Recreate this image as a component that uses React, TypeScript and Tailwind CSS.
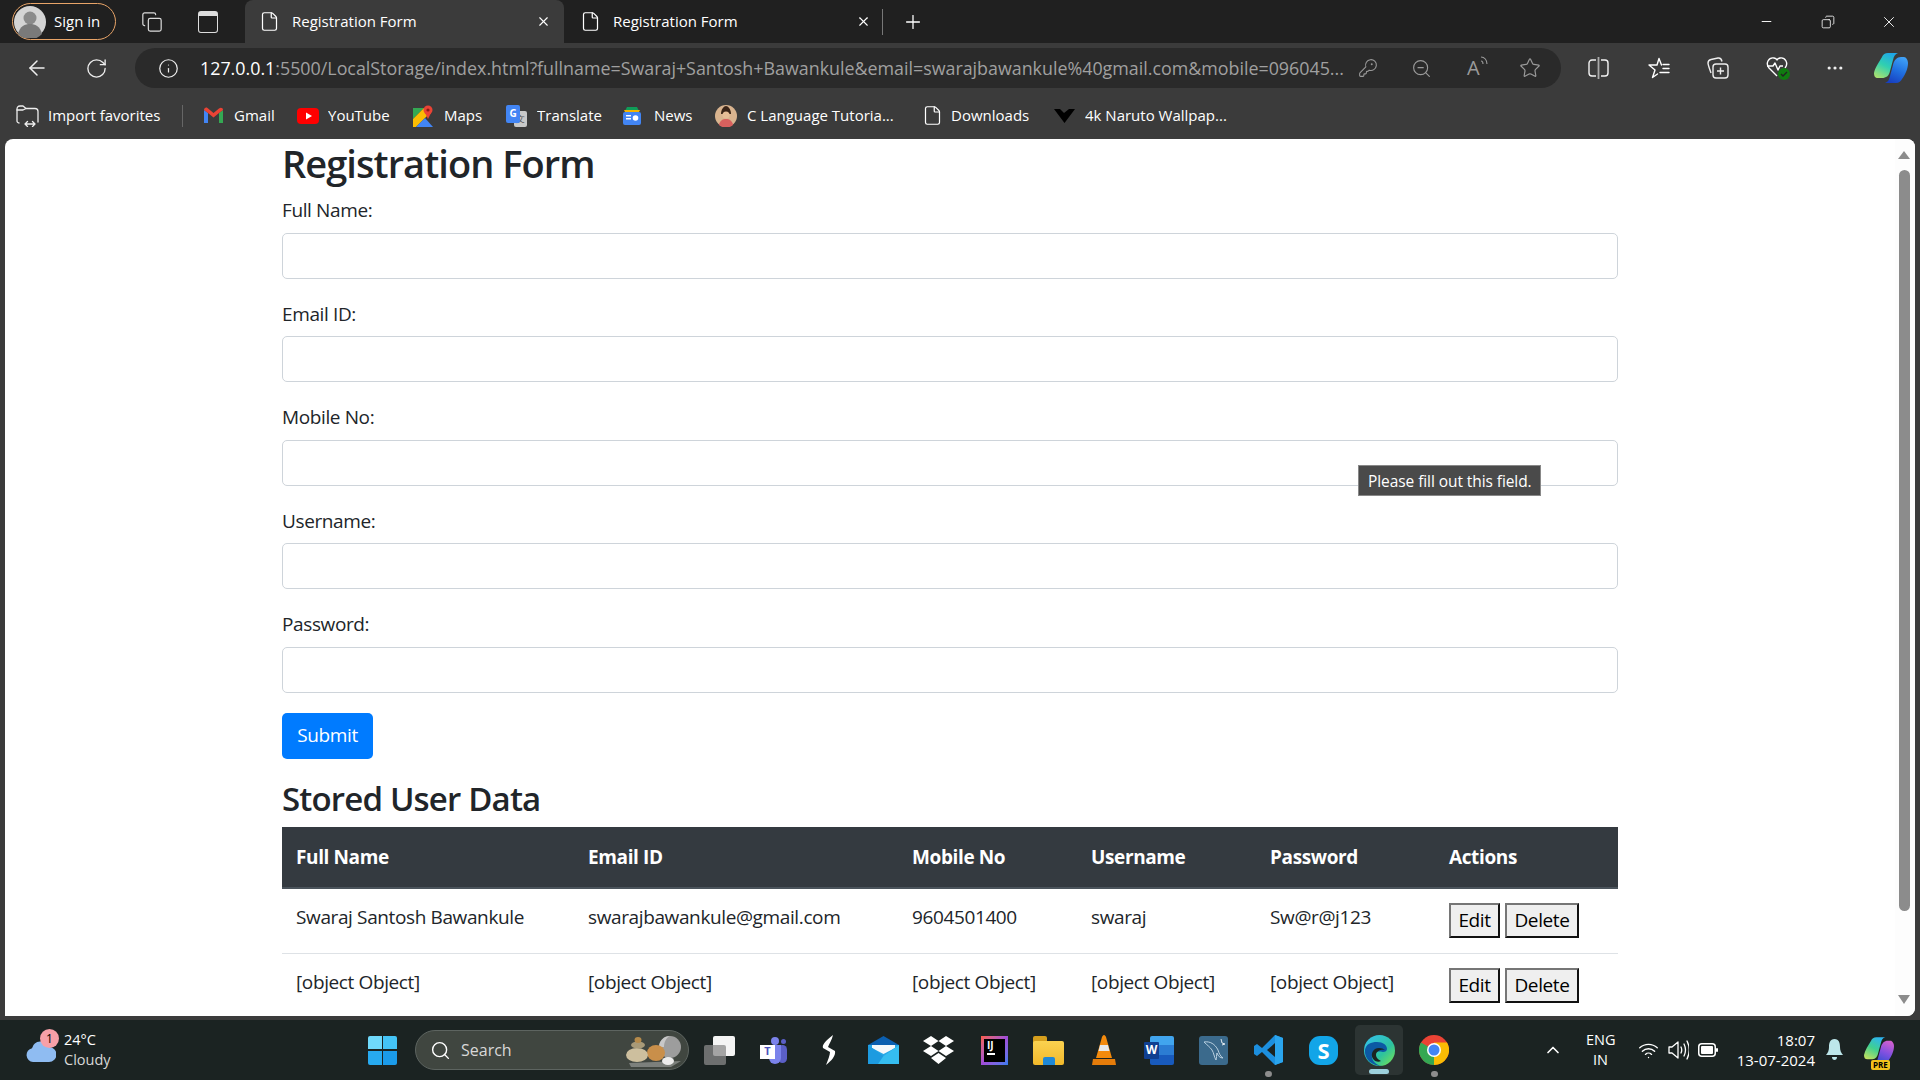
import {
  ArrowLeft,
  ChevronUp,
  Copy,
  File,
  Info,
  KeyRound,
  Minus,
  MoreHorizontal,
  Plus,
  RotateCw,
  Search,
  Star,
  Wifi,
  X,
  ZoomOut,
} from "lucide-react";

const fields = ["Full Name:", "Email ID:", "Mobile No:", "Username:", "Password:"];
const cols = ["Full Name", "Email ID", "Mobile No", "Username", "Password", "Actions"];
const rows = [
  ["Swaraj Santosh Bawankule", "swarajbawankule@gmail.com", "9604501400", "swaraj", "Sw@r@j123"],
  ["[object Object]", "[object Object]", "[object Object]", "[object Object]", "[object Object]"],
];

const Avatar = () => (
  <svg width="32" height="32" viewBox="0 0 32 32">
    <circle cx="16" cy="16" r="16" fill="#d4d4d4" />
    <circle cx="16" cy="12" r="6.500" fill="#8a8a8a" />
    <path d="M4 28c2-8 7-10 12-10s10 2 12 10a16 16 0 0 1-24 0z" fill="#7a7a7a" />
  </svg>
);

const Gmail = () => (
  <svg width="21" height="17" viewBox="0 0 21 17">
    <path d="M1 16V3l4 3v10z" fill="#4285f4" />
    <path d="M20 16V3l-4 3v10z" fill="#34a853" />
    <path d="M5 6 1 3c0-2 2-3 3.500-2L10.500 6 16 1.500C18 0 20 1 20 3l-4 3-5.500 4.500z" fill="#ea4335" />
  </svg>
);

const YouTube = () => (
  <svg width="22" height="16" viewBox="0 0 22 16">
    <rect width="22" height="16" rx="4" fill="#f00" />
    <path d="M9 4.500v7l6-3.500z" fill="#fff" />
  </svg>
);

const Maps = () => (
  <svg width="20" height="22" viewBox="0 0 20 22">
    <path d="M0 3h11l-11 11z" fill="#34a853" />
    <path d="M0 14 11 3l5 6L3 22H0z" fill="#fbbc04" />
    <path d="M3 22 12 13l8 9z" fill="#4285f4" />
    <circle cx="15" cy="5" r="4.500" fill="#ea4335" />
    <path d="m12 8 3 6 3-6z" fill="#ea4335" />
    <circle cx="15" cy="5" r="1.600" fill="#8b1d14" />
  </svg>
);

const Translate = () => (
  <div className="relative h-[22px] w-[21px]">
    <div className="absolute bottom-0 right-0 flex h-[16px] w-[13px] items-center justify-center rounded-[2px] bg-[#c9c9c9] text-[9px] text-[#555]">文</div>
    <div className="absolute left-0 top-0 flex h-[18px] w-[14px] items-center justify-center rounded-[2px] bg-[#4285f4] text-[10px] font-bold text-white">G</div>
  </div>
);

const News = () => (
  <svg width="20" height="20" viewBox="0 0 20 20">
    <path d="M3 5 5 1h10l2 4z" fill="#0f9d58" />
    <path d="M2 4h16l-1 2H3z" fill="#f4b400" />
    <rect x="1" y="6" width="18" height="13" rx="2" fill="#4285f4" />
    <rect x="4" y="9" width="5" height="1.500" fill="#fff" />
    <rect x="4" y="12" width="5" height="1.500" fill="#fff" />
    <circle cx="13.500" cy="12" r="2.800" fill="#fff" />
  </svg>
);

const CTutorial = () => (
  <svg width="22" height="22" viewBox="0 0 22 22">
    <circle cx="11" cy="11" r="11" fill="#d9b48f" />
    <path d="M6 9c0-5 3-8 5-8s5 3 5 8z" fill="#3a2417" />
    <circle cx="11" cy="10" r="3.500" fill="#e6bd96" />
    <path d="M4 20c1-5 4-6 7-6s6 1 7 6a11 11 0 0 1-14 0z" fill="#d8605e" />
  </svg>
);

const Naruto = () => (
  <svg width="21" height="14" viewBox="0 0 21 14">
    <path d="M0 0h6l4 4 5-4h6L10.500 14z" fill="#000" />
  </svg>
);

const ImportIcon = () => (
  <svg width="23" height="22" viewBox="0 0 23 22" fill="none" stroke="#eee" strokeWidth="1.300" strokeLinecap="round" strokeLinejoin="round">
    <path d="M3 18c-1 0-2-1-2-2V4c0-1.500 1-3 3-3h3l3 2.500h9c1.500 0 3 1 3 3V17" />
    <path d="M1 5h6l3-1.500" />
    <path d="M9 19h10M11.500 16.500 9 19l2.500 2.500M16.500 16.500 19 19l-2.500 2.500" />
  </svg>
);

const SplitIcon = () => (
  <svg width="21" height="22" viewBox="0 0 21 22" fill="none" stroke="#f2f2f2" strokeWidth="1.400">
    <path d="M8 3H4a3 3 0 0 0-3 3v10a3 3 0 0 0 3 3h4M13 3h4a3 3 0 0 1 3 3v10a3 3 0 0 1-3 3h-4" />
    <path d="M10.500 0v22" stroke="#aaa" strokeWidth="1.800" />
  </svg>
);

const FavIcon = () => (
  <svg width="22" height="22" viewBox="0 0 22 22" fill="none" stroke="#fff" strokeWidth="1.400" strokeLinejoin="round" strokeLinecap="round">
    <path d="M9 8 11 1.500 13.500 8M9 8H1l6 5-2.500 7.500 5-3.500" />
    <path d="M15 7.500h6M15 11.500h6M12 15.500h9" />
  </svg>
);

const CollectionsIcon = () => (
  <svg width="22" height="22" viewBox="0 0 22 22" fill="none" stroke="#eee" strokeWidth="1.400">
    <path d="M4 16C3 13 1 8 1 6c0-2 1-3 3-3.500L11 1c2-.3 3.500 1 4 3.500" />
    <rect x="6" y="7" width="15" height="14" rx="3" />
    <path d="M13.500 10.500v7M10 14h7" />
  </svg>
);

const HealthIcon = () => (
  <div className="relative h-[24px] w-[24px]">
    <svg width="22" height="22" viewBox="0 0 22 22" fill="none" stroke="#fff" strokeWidth="1.400" strokeLinejoin="round">
      <path d="M11 20 3 12C-1 7 3 1 8 2c1.500.3 2.500 1 3 2 .5-1 1.500-1.700 3-2 5-1 9 5 5 10" />
      <path d="M1 10h6l2-3 3 7 2-4h3" />
    </svg>
    <div className="absolute bottom-0 right-0 flex h-[12px] w-[12px] items-center justify-center rounded-full bg-[#107c10]">
      <svg width="8" height="8" viewBox="0 0 8 8" fill="none" stroke="#222" strokeWidth="1.300">
        <path d="m1 4 2 2 4-4" />
      </svg>
    </div>
  </div>
);

const ReadAloud = () => (
  <div className="flex items-start text-[#9a9a9a]">
    <span className="text-[20px] leading-[24px]">A</span>
    <svg width="8" height="12" viewBox="0 0 8 12" fill="none" stroke="#9a9a9a" strokeWidth="1.100">
      <path d="M1 5c1.500 0 2 1.500 2 3M1 1c3.500 0 6 3 6 7" />
    </svg>
  </div>
);

const Copilot = ({ w, h, id, left, right }: { w: number; h: number; id: string; left: string[]; right: string[] }) => (
  <svg width={w} height={h} viewBox="0 0 34 30">
    <defs>
      <linearGradient id={`${id}a`} x1="0.700" y1="0" x2="0.200" y2="1">
        {left.map((c, i) => (
          <stop key={c} offset={i / (left.length - 1)} stopColor={c} />
        ))}
      </linearGradient>
      <linearGradient id={`${id}b`} x1="0.700" y1="0" x2="0.300" y2="1">
        {right.map((c, i) => (
          <stop key={c} offset={i / (right.length - 1)} stopColor={c} />
        ))}
      </linearGradient>
    </defs>
    <path d="M30 4c2 0 4 3 4 6 0 6-3 12-6 16-1 2-3 4-6 4H11c3-1 4-3 5-7l3-11c1-5 4-8 8-8z" fill={`url(#${id}b)`} />
    <path d="M8 4c1-2.500 3-4 6-4h10c-3 1-4 3-5 7l-3 11c-1 5-4 7-8 7H4c-3 0-4-2-4-5C1 15 5 9 8 4z" fill={`url(#${id}a)`} />
  </svg>
);

const Cloud = () => (
  <svg width="30" height="24" viewBox="0 0 30 24">
    <path d="M7 24a7 7 0 0 1-1-13.800A9 9 0 0 1 23 9a7.500 7.500 0 0 1 0 15z" fill="#8fbcf2" />
  </svg>
);

const WinLogo = () => (
  <div className="grid h-[29px] w-[29px] grid-cols-2 gap-[1.500px]">
    <div className="rounded-tl-[2px] bg-[#6fd9fb]" />
    <div className="rounded-tr-[2px] bg-[#44c4f7]" />
    <div className="rounded-bl-[2px] bg-[#27aaf0]" />
    <div className="rounded-br-[2px] bg-[#1b9bea]" />
  </div>
);

const Pebbles = () => (
  <svg width="62" height="36" viewBox="0 0 62 36">
    <path d="M6 31 58 29 48 35H8z" fill="#7c807c" />
    <circle cx="47" cy="15" r="11" fill="#9d9d9d" />
    <path d="M36 15a11 11 0 0 1 11-11c-4 2-6 6-6 11z" fill="#c8c8c8" />
    <ellipse cx="33" cy="21" rx="9" ry="8" fill="#c98f4a" />
    <ellipse cx="14" cy="23" rx="11" ry="7" fill="#cdbf9e" />
    <ellipse cx="15" cy="13" rx="7" ry="3.500" fill="#a89a78" />
    <ellipse cx="15" cy="8" rx="3.500" ry="3" fill="#b68b4b" />
    <ellipse cx="45" cy="29" rx="6" ry="4" fill="#ececec" />
  </svg>
);

const TaskView = () => (
  <div className="relative h-[29px] w-[31px]">
    <div className="absolute right-0 top-0 h-[20px] w-[22px] rounded-[2px] bg-[#f4f4f4]" />
    <div className="absolute bottom-0 left-0 h-[20px] w-[22px] rounded-[2px] bg-[#8a8a8a]/75" />
  </div>
);

const Teams = () => (
  <div className="relative h-[27px] w-[27px]">
    <div className="absolute right-0 top-[8px] h-[18px] w-[9px] rounded-full bg-[#5b5fc7]" />
    <div className="absolute right-[1px] top-[2px] h-[5px] w-[5px] rounded-full bg-[#5b5fc7]" />
    <div className="absolute right-[8px] top-0 h-[8px] w-[8px] rounded-full bg-[#7b83eb]" />
    <div className="absolute right-[6px] top-[8px] h-[19px] w-[12px] rounded-b-full bg-[#7b83eb]" />
    <div className="absolute bottom-[5px] left-0 flex h-[14px] w-[15px] items-center justify-center bg-white text-[11px] font-bold text-[#4b53bc]">T</div>
  </div>
);

const Wing = () => (
  <svg width="14" height="30" viewBox="0 0 14 30">
    <path d="M11 0C3 6 0 10 1 13l7 4c0 3-2 8-4 13 5-4 10-9 9-14L6 12c1-3 4-7 5-12z" fill="#fff" />
  </svg>
);

const Mail = () => (
  <svg width="31" height="28" viewBox="0 0 31 28">
    <path d="M15.500 0 31 9v4H0V9z" fill="#0b5fb0" />
    <rect y="9" width="31" height="19" fill="#27a7e6" />
    <path d="M4 9h23v3L15.500 18 4 12z" fill="#f4f8fb" />
    <path d="M0 9 15.500 20 31 9v19H0z" fill="#1d9be0" />
    <path d="M15.500 20 31 9v19H10z" fill="#35bdf0" />
  </svg>
);

const Dropbox = () => (
  <svg width="31" height="28" viewBox="0 0 31 28" fill="#fff">
    <path d="m8 0 7.500 5L8 10 0 5zM23 0l8 5-8 5-7.500-5zM8 10l7.500 5L8 20l-8-5zM23 10l8 5-8 5-7.500-5zM15.500 17l7.500 5-7.500 6L8 22z" />
  </svg>
);

const Idea = () => (
  <div className="h-[29px] w-[27px] bg-gradient-to-br from-[#fc5c42] via-[#a04bd8] to-[#2b7cf0] p-[3px]">
    <div className="flex h-full w-full flex-col bg-black pl-[3px] text-[10px] font-bold leading-[12px] text-white">
      IJ
      <div className="mt-[2px] h-[2px] w-[8px] bg-white" />
    </div>
  </div>
);

const Folder = () => (
  <div className="relative h-[29px] w-[31px]">
    <div className="absolute left-0 top-0 h-[10px] w-[14px] rounded-t-[2px] bg-[#d69f1d]" />
    <div className="absolute bottom-0 left-0 top-[5px] w-full rounded-[2px] bg-gradient-to-b from-[#fbd24f] to-[#f2b92a]" />
    <div className="absolute bottom-0 left-[10px] h-[8px] w-[12px] rounded-t-[2px] bg-[#1f88d6]" />
  </div>
);

const Vlc = () => (
  <svg width="24" height="30" viewBox="0 0 24 30">
    <path d="M12 0c1 0 1.500 1 2 2l6 21H4L10 2c.5-1 1-2 2-2z" fill="#f48a0c" />
    <path d="M8 10h8l1.500 6h-11z" fill="#e8e8e8" />
    <path d="M1 24h22l1 6H0z" fill="#e57c0a" />
  </svg>
);

const Word = () => (
  <div className="relative h-[29px] w-[30px]">
    <div className="absolute right-0 top-0 grid h-full w-[24px] grid-rows-3">
      <div className="rounded-t-[2px] bg-[#41a5ee]" />
      <div className="bg-[#2b7cd3]" />
      <div className="rounded-b-[2px] bg-[#185abd]" />
    </div>
    <div className="absolute left-0 top-[6px] flex h-[17px] w-[15px] items-center justify-center rounded-[1px] bg-[#103f91] text-[12px] font-bold text-white">W</div>
  </div>
);

const MySql = () => (
  <svg width="29" height="29" viewBox="0 0 29 29">
    <rect width="29" height="29" rx="3" fill="#3b6a8c" />
    <path d="M5 6c6-1 11 2 14 8 1 3 2 6 5 8-3 0-5-2-6-5-1 2 0 5-1 7-2-3-2-7-4-10C11 11 8 9 5 6z" fill="none" stroke="#b9d0e0" strokeWidth="1" />
    <path d="m22 3 1 4 3 1-3 1" fill="none" stroke="#e0e8ee" strokeWidth="1" />
  </svg>
);

const VsCode = () => (
  <svg width="29" height="30" viewBox="0 0 29 30">
    <path d="M21 0 8 13 3 9 0 11v8l3 2 5-4 13 13 8-3V3z" fill="#1c8fdf" />
    <path d="m21 8-8 7 8 7z" fill="#1b2322" />
    <path d="M21 0l8 3v24l-8 3z" fill="#2aa5ee" />
  </svg>
);

const Skype = () => (
  <div className="flex h-[29px] w-[29px] items-center justify-center rounded-[11px] bg-[#12a5e8] text-[22px] font-bold leading-none text-white">S</div>
);

const Edge = () => (
  <svg width="31" height="31" viewBox="0 0 31 31">
    <defs>
      <linearGradient id="edg" x1="0" y1="0" x2="1" y2="1">
        <stop offset="0" stopColor="#35c1f1" />
        <stop offset="0.6" stopColor="#2dc29f" />
        <stop offset="1" stopColor="#7de84a" />
      </linearGradient>
    </defs>
    <circle cx="15.500" cy="15.500" r="15.500" fill="url(#edg)" />
    <path d="M1 15C2 9 7 7 13 7c6 0 10 3 10 7 0 2-2 3-4 3-3 0-9-2-11 3-1 4 3 10 10 11C8 31 0 24 1 15z" fill="#0c59a4" />
    <path d="M10 25c-3-3-3-8 1-11 3-2 8-1 10 1-4-1-9 1-9 5 0 3 3 5 5 6-2 1-5 1-7-1z" fill="#1b2322" />
  </svg>
);

const Chrome = () => (
  <svg width="30" height="30" viewBox="0 0 30 30">
    <circle cx="15" cy="15" r="15" fill="#ea4335" />
    <path d="M15 15 2 7.500A15 15 0 0 0 15 30z" fill="#34a853" />
    <path d="M15 15 28 7.500H15zM15 15v15a15 15 0 0 0 13-22.500z" fill="#fbbc04" />
    <circle cx="15" cy="15" r="7" fill="#fff" />
    <circle cx="15" cy="15" r="5.500" fill="#4285f4" />
  </svg>
);

const VolumeIcon = () => (
  <svg width="21" height="22" viewBox="0 0 21 22" fill="none" stroke="#fff" strokeWidth="1.300" strokeLinejoin="round" strokeLinecap="round">
    <path d="M1 8h3l6-5v16l-6-5H1z" />
    <path d="M13 8c1 2 1 4 0 6M16 5c2 4 2 8 0 12M19 2c3 6 3 12 0 18" />
  </svg>
);

const BatteryIcon = () => (
  <svg width="20" height="14" viewBox="0 0 20 14">
    <rect x="0.750" y="0.750" width="16.500" height="12.500" rx="3" fill="none" stroke="#fff" strokeWidth="1.500" />
    <rect x="3" y="3" width="12" height="8" rx="1" fill="#fff" />
    <rect x="18" y="5" width="2" height="4" rx="1" fill="#fff" />
  </svg>
);

const BellIcon = () => (
  <svg width="17" height="22" viewBox="0 0 17 22" fill="#bde6ea">
    <path d="M8.500 0C4 0 3 4 3 8c0 3-1 6-3 8h17c-2-2-3-5-3-8 0-4-1-8-5.500-8z" />
    <path d="M6 18h5c0 2-1 3-2.500 3S6 20 6 18z" />
  </svg>
);

const bookmarks = [
  { label: "Gmail", icon: <Gmail />, slot: "ml-[19px] w-[22px]", text: "ml-[10px] w-[63px]" },
  { label: "YouTube", icon: <YouTube />, slot: "w-[22px]", text: "ml-[9px] w-[85px]" },
  { label: "Maps", icon: <Maps />, slot: "w-[20px]", text: "ml-[11px] w-[62px]" },
  { label: "Translate", icon: <Translate />, slot: "w-[21px]", text: "ml-[10px] w-[85px]" },
  { label: "News", icon: <News />, slot: "w-[20px]", text: "ml-[12px] w-[61px]" },
  { label: "C Language Tutoria...", icon: <CTutorial />, slot: "w-[22px]", text: "ml-[10px] w-[175px]" },
  { label: "Downloads", icon: <File size={21} strokeWidth={1.4} color="#fff" />, slot: "w-[21px]", text: "ml-[8px] w-[103px]" },
  { label: "4k Naruto Wallpap...", icon: <Naruto />, slot: "w-[21px]", text: "ml-[10px]" },
];

const Tab = ({ active, xMargin }: { active?: boolean; xMargin: string }) => (
  <div className={`flex h-[43px] items-center ${active ? "w-[319px] rounded-t-lg bg-[#3b3b3b] pl-[14px]" : "w-[320px] pl-[16px]"}`}>
    <File size={21} strokeWidth={1.4} color="#fff" />
    <span className="ml-[12px] text-[15px] text-white">Registration Form</span>
    <X size={15} strokeWidth={1.8} color="#fff" className={xMargin} />
  </div>
);

export default function App() {
  return (
    <div className="flex h-screen w-full flex-col overflow-hidden bg-[#3b3b3b] font-['Open_Sans','Noto_Sans',sans-serif]">
      {/* tab strip */}
      <div className="flex h-[43px] shrink-0 items-center bg-[#202020]">
        <div className="ml-[12px] flex h-[37px] w-[104px] items-center rounded-full border border-[#e8a468] pl-[1px]">
          <Avatar />
          <span className="ml-[8px] text-[15px] text-white">Sign in</span>
        </div>
        <Copy size={22} strokeWidth={1.3} color="#ddd" className="ml-[25px]" />
        <div className="ml-[35px] h-[22px] w-[20px] rounded-[3px] border-[1.500px] border-[#ddd] border-t-[5px]" />
        <div className="ml-[27px]">
          <Tab active xMargin="ml-[119px]" />
        </div>
        <Tab xMargin="ml-[118px]" />
        <div className="ml-[-2px] h-[26px] w-px bg-[#777]" />
        <Plus size={22} strokeWidth={1.4} color="#fff" className="ml-[19px]" />
        <Minus size={15} strokeWidth={1.5} color="#fff" className="ml-auto" />
        <Copy size={14} strokeWidth={1.4} color="#fff" className="ml-[47px] -scale-x-100" />
        <X size={18} strokeWidth={1.2} color="#fff" className="ml-[45px] mr-[22px]" />
      </div>

      {/* address bar */}
      <div className="flex h-[51px] shrink-0 items-center pt-[5px] pb-[6px]">
        <ArrowLeft size={24} strokeWidth={1.5} color="#eee" className="ml-[25px]" />
        <RotateCw size={23} strokeWidth={1.4} color="#eee" className="ml-[36px]" />
        <div className="ml-[27px] flex h-[40px] w-[1426px] items-center rounded-full bg-[#2a2a2a] pl-[23px]">
          <Info size={21} strokeWidth={1.4} color="#eee" />
          <div className="ml-[21px] w-[1150px] truncate whitespace-nowrap text-[17.850px] text-[#a0a0a0]">
            <span className="text-white">127.0.0.1</span>
            :5500/LocalStorage/index.html?fullname=Swaraj+Santosh+Bawankule&amp;email=swarajbawankule%40gmail.com&amp;mobile=096045...
          </div>
          <KeyRound size={20} strokeWidth={1.3} color="#9a9a9a" className="ml-[8px]" />
          <ZoomOut size={21} strokeWidth={1.3} color="#9a9a9a" className="ml-[33px]" />
          <div className="ml-[35px]"><ReadAloud /></div>
          <Star size={22} strokeWidth={1.3} color="#9a9a9a" className="ml-[31px]" />
        </div>
        <div className="ml-[27px]"><SplitIcon /></div>
        <div className="ml-[39px]"><FavIcon /></div>
        <div className="ml-[37px]"><CollectionsIcon /></div>
        <div className="ml-[37px]"><HealthIcon /></div>
        <MoreHorizontal size={20} strokeWidth={1.8} color="#eee" className="ml-[35px]" />
        <div className="ml-[29px]">
          <Copilot w={34} h={30} id="cp" left={["#1fa6e8", "#30d0b0", "#a8e070"]} right={["#3fa0f5", "#2070e0", "#1840c0"]} />
        </div>
      </div>

      {/* favorites bar */}
      <div className="flex h-[45px] shrink-0 items-center pb-[2px] text-[15px] text-white">
        <div className="ml-[16px]"><ImportIcon /></div>
        <span className="ml-[9px] w-[134px]">Import favorites</span>
        <div className="h-[22px] w-px bg-[#666]" />
        {bookmarks.map((b) => (
          <div key={b.label} className="flex items-center">
            <div className={`flex justify-center ${b.slot}`}>{b.icon}</div>
            <span className={`truncate whitespace-nowrap ${b.text}`}>{b.label}</span>
          </div>
        ))}
      </div>

      {/* page */}
      <div className="ml-[5px] mr-[5px] flex h-[877px] shrink-0 overflow-hidden rounded-t-lg rounded-br-lg bg-white text-[#212529]">
        <div className="min-w-0 flex-1 overflow-hidden">
          <div className="ml-[277px] w-[1336px] text-[19px]">
            <h1 className="mb-[8px] h-[48px] text-[38px] leading-[48px] font-semibold tracking-[-0.025em]">Registration Form</h1>
            {fields.map((f, i) => (
              <div key={f} className="relative mb-[20px]">
                <label className="mb-[8.500px] block h-[29px] leading-[31px] tracking-[-0.02em]">{f}</label>
                <div className="h-[46px] rounded-[5px] border border-[#ced4da] bg-white" />
                {i === 2 && (
                  <div className="absolute left-[1076px] top-[63px] flex h-[31px] w-[183px] items-center border border-[#888] bg-[#4a4a4a] pt-[3px] pl-[9px] text-[15.500px] whitespace-nowrap tracking-[-0.005em] text-white">
                    Please fill out this field.
                  </div>
                )}
              </div>
            ))}
            <button className="h-[46px] w-[91px] rounded-[5px] bg-[#007bff] tracking-[-0.02em] text-white">Submit</button>
            <h2 className="mt-[15px] mb-[4px] h-[49px] text-[33px] leading-[49px] font-semibold tracking-[-0.025em]">Stored User Data</h2>
            <table className="w-full table-fixed tracking-[-0.02em]">
              <colgroup>
                <col className="w-[292px]" />
                <col className="w-[324px]" />
                <col className="w-[179px]" />
                <col className="w-[179px]" />
                <col className="w-[179px]" />
                <col className="w-[183px]" />
              </colgroup>
              <thead>
                <tr className="h-[61px] border-b-2 border-[#4b545c] bg-[#343a40] text-white">
                  {cols.map((c) => (
                    <th key={c} className="px-[14px] pt-[2px] text-left font-bold">{c}</th>
                  ))}
                </tr>
              </thead>
              <tbody>
                {rows.map((r, i) => (
                  <tr key={i} className="border-b border-[#dee2e6]">
                    {r.map((v, j) => (
                      <td key={j} className="truncate px-[14px] pt-[14px] pb-[19px] align-top leading-[29px]">{v}</td>
                    ))}
                    <td className="px-[14px] pt-[14px] pb-[15px] align-top">
                      <div className="flex gap-[5px] text-black">
                        <button className="h-[35px] w-[51px] border-2 border-t-[#767676] border-l-[#767676] border-r-[#111] border-b-[#111] bg-[#efefef]">Edit</button>
                        <button className="h-[35px] w-[74px] border-2 border-t-[#767676] border-l-[#767676] border-r-[#111] border-b-[#111] bg-[#efefef]">Delete</button>
                      </div>
                    </td>
                  </tr>
                ))}
              </tbody>
            </table>
          </div>
        </div>
        {/* scrollbar */}
        <div className="flex w-[20px] shrink-0 flex-col items-center bg-[#fdfdfd] pr-[2px]">
          <div className="mt-[12px] h-0 w-0 border-x-[6px] border-b-[8px] border-x-transparent border-b-[#8c8c8c]" />
          <div className="mt-[11px] h-[741px] w-[11px] rounded-full bg-[#8c8c8c]" />
          <div className="mt-[84px] h-0 w-0 border-x-[6px] border-t-[9px] border-x-transparent border-t-[#8c8c8c]" />
        </div>
      </div>

      {/* taskbar */}
      <div className="mt-[4px] flex h-[60px] shrink-0 items-center bg-[#1b2322] text-white">
        <div className="relative ml-[26px]">
          <Cloud />
          <div className="absolute -top-[9px] left-[14px] flex h-[19px] w-[19px] items-center justify-center rounded-full bg-[#f7a0a8] text-[12px] text-black">1</div>
        </div>
        <div className="ml-[8px] w-[50px] text-[14.500px] leading-[20px]">
          <div>24°C</div>
          <div className="text-[#d8d8d8]">Cloudy</div>
        </div>
        <div className="ml-[254px]"><WinLogo /></div>
        <div className="ml-[18px] flex h-[40px] w-[274px] items-center rounded-full border border-[#5d6460] bg-[#404640] pl-[14px]">
          <Search size={21} strokeWidth={1.6} color="#fff" />
          <span className="ml-[10px] text-[16px] text-[#d8d8d8]">Search</span>
          <div className="ml-auto pr-[3px]"><Pebbles /></div>
        </div>
        <div className="ml-[15px]"><TaskView /></div>
        <div className="ml-[25px]"><Teams /></div>
        <div className="ml-[35px]"><Wing /></div>
        <div className="ml-[32px]"><Mail /></div>
        <div className="ml-[24px]"><Dropbox /></div>
        <div className="ml-[27px]"><Idea /></div>
        <div className="ml-[25px]"><Folder /></div>
        <div className="ml-[28px]"><Vlc /></div>
        <div className="ml-[28px]"><Word /></div>
        <div className="ml-[25px]"><MySql /></div>
        <div className="relative ml-[26px]">
          <VsCode />
          <div className="absolute -bottom-[12px] left-[11px] h-[6px] w-[7px] rounded-full bg-[#8d8d8d]" />
        </div>
        <div className="ml-[26px]"><Skype /></div>
        <div className="relative ml-[17px] flex h-[50px] w-[48px] items-center justify-center rounded-[5px] bg-[#2c3433]">
          <Edge />
          <div className="absolute bottom-[1px] left-[14px] h-[5px] w-[20px] rounded-full bg-[#9cd0dc]" />
        </div>
        <div className="relative ml-[16px]">
          <Chrome />
          <div className="absolute -bottom-[12px] left-[12px] h-[6px] w-[7px] rounded-full bg-[#8d8d8d]" />
        </div>
        <ChevronUp size={20} strokeWidth={2} color="#fff" className="ml-[94px]" />
        <div className="ml-[23px] w-[29px] text-center text-[14.500px] leading-[20px]">
          <div>ENG</div>
          <div>IN</div>
        </div>
        <Wifi size={21} strokeWidth={1.6} color="#fff" className="ml-[23px]" />
        <div className="ml-[9px]"><VolumeIcon /></div>
        <div className="ml-[9px]"><BatteryIcon /></div>
        <div className="ml-[11px] w-[86px] text-right text-[15px] leading-[20px] whitespace-nowrap">
          <div>18:07</div>
          <div>13-07-2024</div>
        </div>
        <div className="ml-[11px]"><BellIcon /></div>
        <div className="relative ml-[21px]">
          <Copilot w={30} h={27} id="cq" left={["#2db5f0", "#40d090", "#c0e060"]} right={["#d060d0", "#8050e0", "#3050d0"]} />
          <div className="absolute -bottom-[6px] left-[7px] rounded-[2px] bg-[#f3c11b] px-[2px] text-[8px] leading-[10px] font-bold text-black">PRE</div>
        </div>
      </div>
    </div>
  );
}
